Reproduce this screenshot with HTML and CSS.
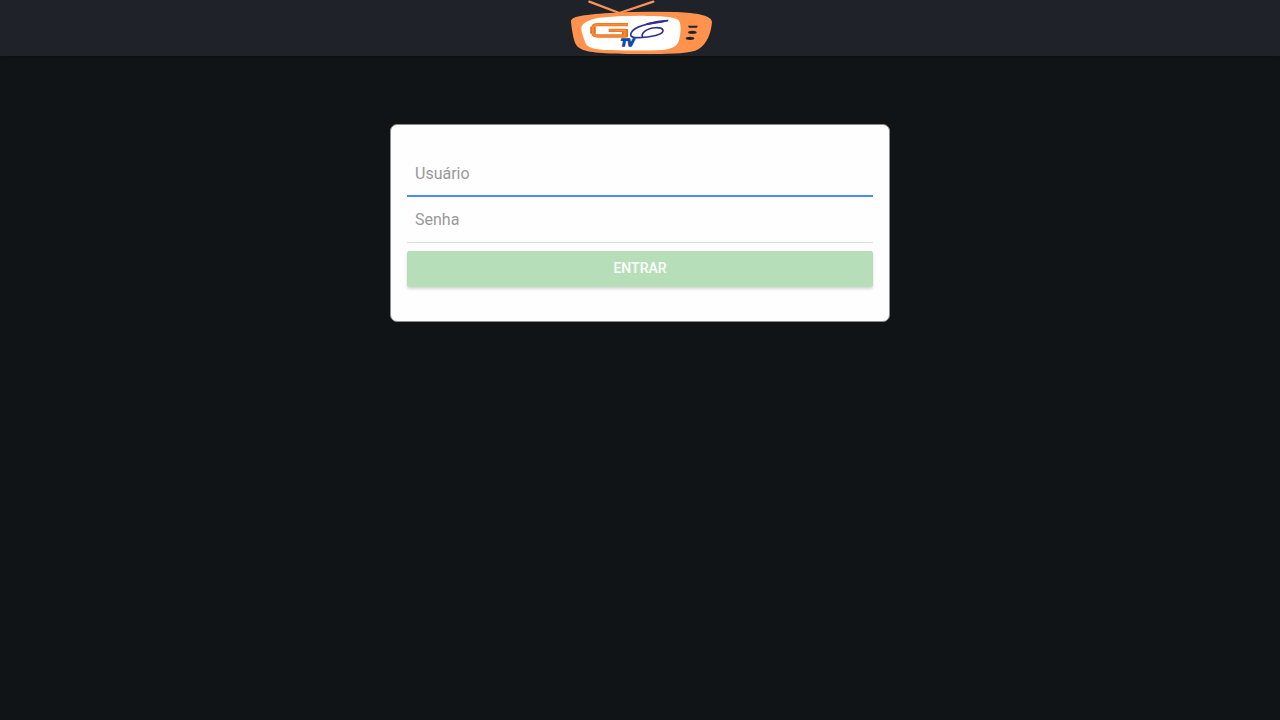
FILE: index.html
```html
<!DOCTYPE html>
<html lang="pt-BR">
<head>
<meta charset="utf-8">
<meta name="viewport" content="width=device-width, initial-scale=1">
<title>G6 TV</title>
<link rel="stylesheet" href="styles.css">
</head>
<body>
<header class="toolbar">
  <svg class="logo" viewBox="0 0 480 168" role="img" aria-label="G6 TV">
    <path d="M88 5L178 39L280 5" fill="none" stroke="#f5935a" stroke-width="7" stroke-linecap="round" stroke-linejoin="round"/>
    <path d="M33 65C33 50 60 45 150 39Q240 33 350 36C410 39 456 46 456 67C453 99 442 131 415 148C388 164 310 162 230 162C150 162 90 160 65 148C45 138 43 124 38 101Q34 80 33 65Z" fill="#ff924d"/>
    <path d="M64 85C64 70 85 59 118 53Q170 47 240 47C300 48 345 49 356 61C365 74 362 99 358 117C354 138 340 146 306 150Q240 153 151 150C105 149 82 143 76 128C70 112 64 98 64 85Z" fill="#fff"/>
    <g fill="none" stroke-linejoin="round">
      <path d="M204 74H114Q99 74 99 82V99Q99 108 114 108H195V91H146" stroke="#e47524" stroke-width="10"/>
      <path d="M195 87V112" stroke="#e47524" stroke-width="18"/>
      <path d="M99 80V101" stroke="#e47524" stroke-width="17"/>
      <path d="M203 74H114Q99 74 99 82V99Q99 108 114 108H195V91H148" stroke="#ff8a35" stroke-width="5"/>
    </g>
    <path d="M322 62C290 66 238 74 219 91C205 107 213 114 236 113C272 112 311 104 309 91C306 80 272 80 254 94C246 101 245 107 248 112" fill="none" stroke="#33308f" stroke-width="5" stroke-linecap="round"/>
    <path d="M327 59L293 62L258 70L262 75L300 69Q320 66 327 59Z" fill="#33308f"/>
    <text class="logo-text" x="183" y="138">TV</text>
    <path d="M384 77H414L410 83H387Z" fill="#202329"/>
    <ellipse cx="397" cy="97" rx="13" ry="5" fill="#202329"/>
    <ellipse cx="390" cy="115" rx="13" ry="5" fill="#202329"/>
  </svg>
</header>
<main class="page">
  <form class="card">
    <input class="field field-active" type="text" placeholder="Usuário" aria-label="Usuário">
    <input class="field" type="password" placeholder="Senha" aria-label="Senha">
    <button class="submit" type="submit" disabled>Entrar</button>
  </form>
</main>
</body>
</html>
```
FILE: styles.css
```css
* {
  box-sizing: border-box;
}

body {
  margin: 0;
  min-height: 100vh;
  background: #101416;
  font-family: Roboto, "Liberation Sans", sans-serif;
}

.toolbar {
  display: flex;
  justify-content: center;
  height: 56px;
  background: #1f2228;
  box-shadow: 0 2px 4px rgba(0, 0, 0, 0.2);
}

.logo {
  width: 160px;
  height: 56px;
}

.logo-text {
  font: italic 700 27px "DejaVu Sans", sans-serif;
  font-kerning: none;
  fill: #0b49a5;
  stroke: #0b49a5;
  stroke-width: 4px;
}

.page {
  padding: 68px 16px 16px;
}

.card {
  display: flex;
  flex-direction: column;
  max-width: 500px;
  margin: 0 auto;
  padding: 26px 16px 34px;
  background: #fefefe;
  border: 1px solid #8c8c8c;
  border-radius: 7px;
}

.field {
  width: 100%;
  height: 46px;
  padding: 0 8px;
  border: 0;
  border-bottom: 1px solid #dedede;
  border-radius: 0;
  outline: 0;
  background: transparent;
  color: #222222;
  font: 16px Roboto, "Liberation Sans", sans-serif;
}

.field-active {
  border-bottom: 2px solid #488aff;
}

.field::placeholder {
  color: #999999;
  opacity: 1;
}

.submit {
  height: 36px;
  margin-top: 8px;
  padding: 0 16px 2px;
  border: 0;
  border-radius: 2px;
  background: #b6dfb9;
  box-shadow: 0 2px 3px rgba(0, 0, 0, 0.16);
  color: #ffffff;
  font: 500 14px Roboto, "Liberation Sans", sans-serif;
  text-transform: uppercase;
}
```
